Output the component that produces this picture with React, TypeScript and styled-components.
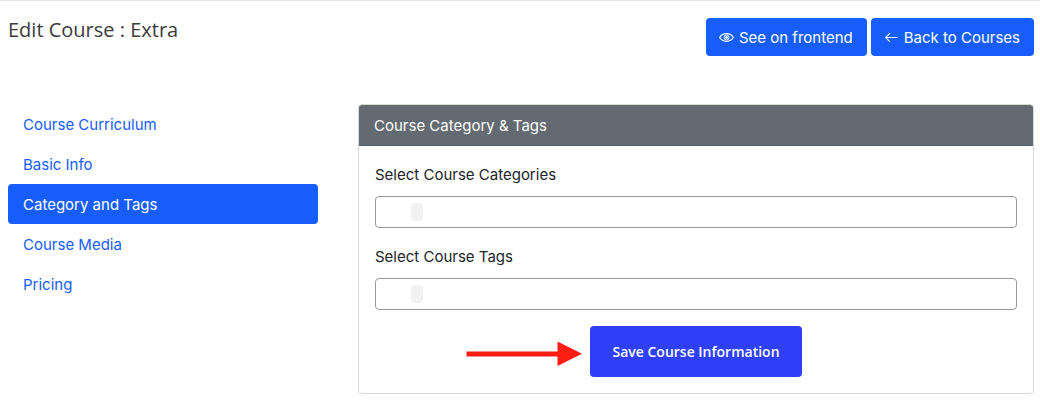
import React from "react";
import styled, { createGlobalStyle, css } from "styled-components";

const GlobalStyle = createGlobalStyle`
  *, *::before, *::after { box-sizing: border-box; }
  body {
    margin: 0;
    background: #fff;
    color: #212529;
    font-family: Inter, "Liberation Sans", sans-serif;
    font-size: 15px;
    line-height: 24px;
  }
`;

const Page = styled.div`
  border-top: 1px solid #e5e5e5;
  padding: 17px 6px 10px 8px;
`;

const Header = styled.header`
  display: flex;
  justify-content: space-between;
  align-items: flex-start;
  margin-bottom: 48px;
`;

const Title = styled.h1`
  margin: 0;
  color: #3c3c3c;
  font-family: "Open Sans", "Noto Sans", sans-serif;
  font-size: 20px;
  font-weight: 400;
  line-height: 24px;
`;

const HeaderActions = styled.div`
  display: flex;
  gap: 4px;
`;

const LinkButton = styled.a`
  display: inline-flex;
  align-items: center;
  gap: 5px;
  padding: 8px 14px 6px 13px;
  border-radius: 4px;
  background: #165dfb;
  color: #fff;
  text-decoration: none;
  white-space: nowrap;
`;

const Layout = styled.div`
  display: flex;
  align-items: flex-start;
  gap: 40px;
`;

const SideNav = styled.nav`
  flex: 0 0 310px;
  display: flex;
  flex-direction: column;
`;

const NavItem = styled.a<{ $active?: boolean }>`
  padding: 9px 15px 7px;
  border-radius: 4px;
  color: #165dfb;
  text-decoration: none;
  ${({ $active }) =>
    $active &&
    css`
      background: #165dfb;
      color: #fff;
    `}
`;

const Card = styled.section`
  flex: 1;
  min-width: 0;
  border: 1px solid #d9d9d9;
  border-radius: 4px;
  overflow: hidden;
`;

const CardHeader = styled.h2`
  margin: 0;
  padding: 9px 15px 7px;
  border-bottom: 1px solid #4f5f6c;
  background: #636a71;
  color: #fff;
  font-size: 15px;
  font-weight: 400;
`;

const CardBody = styled.form`
  display: flex;
  flex-direction: column;
  gap: 16px;
  padding: 16px;
`;

const Field = styled.div`
  display: flex;
  flex-direction: column;
  gap: 9px;
`;

const FieldLabel = styled.label`
  padding-top: 1px;
`;

const TagBox = styled.div`
  display: flex;
  align-items: center;
  height: 32px;
  padding: 0 8px 0 35px;
  border: 1px solid #979797;
  border-radius: 4px;
`;

const Chip = styled.span`
  width: 12px;
  height: 18px;
  border-radius: 4px;
  background: #f1f1f1;
`;

const TagInput = styled.input`
  flex: 1;
  min-width: 0;
  border: 0;
  outline: 0;
  background: transparent;
  font: inherit;
`;

const FormActions = styled.div`
  display: flex;
  justify-content: center;
`;

const SaveWrap = styled.div`
  position: relative;
`;

const SaveButton = styled.button`
  height: 51px;
  padding: 0 22px;
  border: 0;
  border-radius: 4px;
  background: #303ffa;
  color: #fff;
  font-family: "Open Sans", "Noto Sans", sans-serif;
  font-size: 14px;
  font-weight: 600;
  white-space: nowrap;
`;

const Pointer = styled.svg`
  position: absolute;
  top: 15px;
  right: calc(100% + 8px);
`;

const EyeIcon = () => (
  <svg width="15" height="16" viewBox="0 0 15 16" fill="none" stroke="#fff" aria-hidden="true">
    <path
      d="M0.700 7.500C2 5.200 4.500 3.700 7.500 3.700S13 5.200 14.300 7.500C13 9.800 10.500 11.300 7.500 11.300S2 9.800 0.700 7.500Z"
      strokeWidth="1.200"
    />
    <circle cx="7.500" cy="7.500" r="2.500" />
    <circle cx="7.500" cy="7.500" r="1" fill="#fff" />
  </svg>
);

const ArrowLeftIcon = () => (
  <svg width="15" height="16" viewBox="0 0 15 16" fill="none" stroke="#fff" aria-hidden="true">
    <path d="M13.500 7.500H2M6 3.200L1.700 7.500L6 11.800" strokeWidth="1.100" />
  </svg>
);

const navItems = ["Course Curriculum", "Basic Info", "Category and Tags", "Course Media", "Pricing"];

const fields = [
  { id: "categories", label: "Select Course Categories" },
  { id: "tags", label: "Select Course Tags" },
];

export default function App() {
  return (
    <>
      <GlobalStyle />
      <Page>
        <Header>
          <Title>Edit Course : Extra</Title>
          <HeaderActions>
            <LinkButton href="#frontend">
              <EyeIcon />
              See on frontend
            </LinkButton>
            <LinkButton href="#courses">
              <ArrowLeftIcon />
              Back to Courses
            </LinkButton>
          </HeaderActions>
        </Header>
        <Layout>
          <SideNav>
            {navItems.map((item) => (
              <NavItem key={item} href="#section" $active={item === "Category and Tags"}>
                {item}
              </NavItem>
            ))}
          </SideNav>
          <Card>
            <CardHeader>Course Category &amp; Tags</CardHeader>
            <CardBody>
              {fields.map(({ id, label }) => (
                <Field key={id}>
                  <FieldLabel htmlFor={id}>{label}</FieldLabel>
                  <TagBox>
                    <Chip />
                    <TagInput id={id} type="text" />
                  </TagBox>
                </Field>
              ))}
              <FormActions>
                <SaveWrap>
                  <Pointer width="116" height="26" viewBox="0 0 116 26" fill="#ff1d14" aria-hidden="true">
                    <path d="M0.500 10.500H91.500V0.500L116 12.800L91.500 25V15.500H0.500Z" />
                  </Pointer>
                  <SaveButton type="button">Save Course Information</SaveButton>
                </SaveWrap>
              </FormActions>
            </CardBody>
          </Card>
        </Layout>
      </Page>
    </>
  );
}
